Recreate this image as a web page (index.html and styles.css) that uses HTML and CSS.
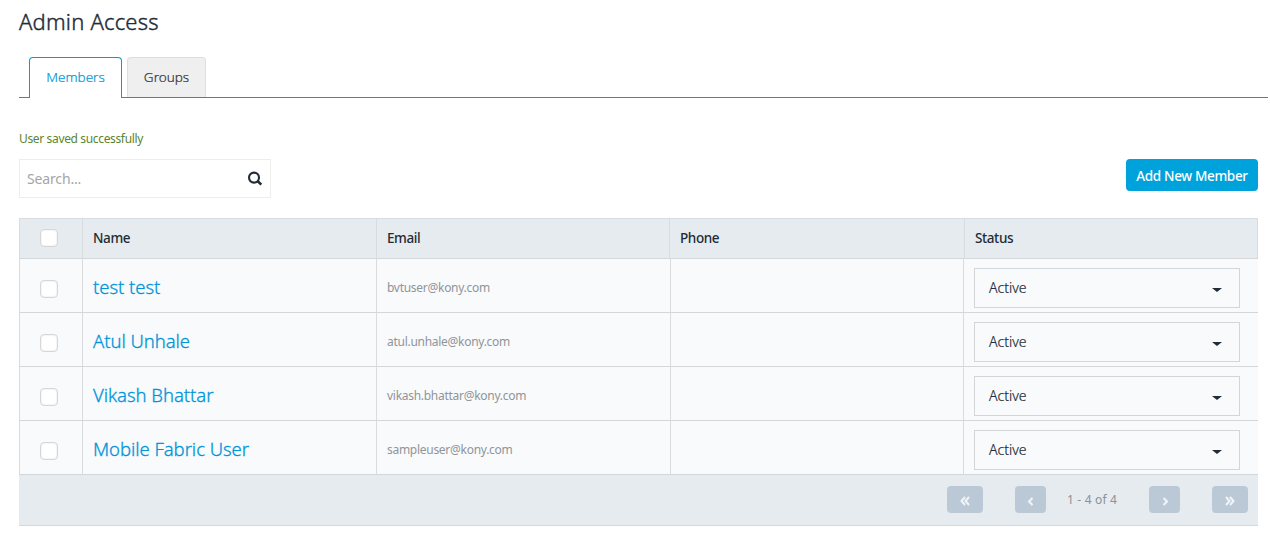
FILE: index.html
```html
<!DOCTYPE html>
<html lang="en">
<head>
<meta charset="utf-8">
<title>Admin Access</title>
<link rel="stylesheet" href="styles.css">
</head>
<body>
<main class="page">
  <h1 class="title"><span class="t">Admin Access</span></h1>
  <nav class="tabs">
    <a class="tab tab-active"><span class="t">Members</span></a>
    <a class="tab"><span class="t">Groups</span></a>
  </nav>
  <p class="message"><span class="t">User saved successfully</span></p>
  <div class="toolbar">
    <div class="search">
      <span class="t">Search...</span>
      <svg class="search-icon" width="16" height="16" viewBox="0 0 16 16"><circle cx="7" cy="6.600" r="5" fill="none" stroke="#222b38" stroke-width="2.100"/><path d="M10.500 10L14.300 13.600" stroke="#222b38" stroke-width="2.600"/></svg>
    </div>
    <button class="add"><span class="t">Add New Member</span></button>
  </div>
  <section class="table">
    <div class="row head">
      <div class="cell check"><i class="box"></i></div>
      <div class="cell"><span class="t">Name</span></div>
      <div class="cell"><span class="t">Email</span></div>
      <div class="cell"><span class="t">Phone</span></div>
      <div class="cell"><span class="t">Status</span></div>
    </div>
    <div class="row">
      <div class="cell check"><i class="box"></i></div>
      <div class="cell name"><span class="t">test test</span></div>
      <div class="cell email"><span class="t">bvtuser@kony.com</span></div>
      <div class="cell"></div>
      <div class="cell status"><div class="select"><span class="t">Active</span><i class="caret"></i></div></div>
    </div>
    <div class="row">
      <div class="cell check"><i class="box"></i></div>
      <div class="cell name"><span class="t">Atul Unhale</span></div>
      <div class="cell email"><span class="t">atul.unhale@kony.com</span></div>
      <div class="cell"></div>
      <div class="cell status"><div class="select"><span class="t">Active</span><i class="caret"></i></div></div>
    </div>
    <div class="row">
      <div class="cell check"><i class="box"></i></div>
      <div class="cell name"><span class="t">Vikash Bhattar</span></div>
      <div class="cell email"><span class="t">vikash.bhattar@kony.com</span></div>
      <div class="cell"></div>
      <div class="cell status"><div class="select"><span class="t">Active</span><i class="caret"></i></div></div>
    </div>
    <div class="row">
      <div class="cell check"><i class="box"></i></div>
      <div class="cell name"><span class="t">Mobile Fabric User</span></div>
      <div class="cell email"><span class="t">sampleuser@kony.com</span></div>
      <div class="cell"></div>
      <div class="cell status"><div class="select"><span class="t">Active</span><i class="caret"></i></div></div>
    </div>
    <div class="pager">
      <button class="pg wide first"><svg width="10" height="10" viewBox="0 0 10 10"><path d="M5 1L1.500 5L5 9M9 1L5.500 5L9 9"/></svg></button>
      <button class="pg prev"><svg width="10" height="10" viewBox="0 0 10 10"><path d="M6.500 2L3 5.500L6.500 9"/></svg></button>
      <span class="range"><span class="t">1 - 4 of 4</span></span>
      <button class="pg next"><svg width="10" height="10" viewBox="0 0 10 10"><path d="M3.500 2L7 5.500L3.500 9"/></svg></button>
      <button class="pg wide"><svg width="10" height="10" viewBox="0 0 10 10"><path d="M1 1L4.500 5L1 9M5 1L8.500 5L5 9"/></svg></button>
    </div>
  </section>
</main>
</body>
</html>
```
FILE: styles.css
```css
* { box-sizing: border-box; }
body { margin: 0; background: #fff; color: #222b38; font-family: "Noto Sans", "Open Sans", sans-serif; font-size: 14px; overflow: hidden; }
.page { padding: 8px 12px 0 19px; }
.t { white-space: nowrap; }
.title { margin: 0; height: 49px; font-size: 22px; line-height: 27px; font-weight: 300; letter-spacing: .2px; -webkit-text-stroke: .4px; }
.tabs { display: flex; gap: 5px; height: 41px; width: 1249px; padding-left: 10px; border-bottom: 1px solid #009fcf; }
.tab { width: 79px; height: 40px; border: 1px solid #dedede; border-bottom: 0; border-radius: 4px 4px 0 0; background: #efefef; color: #30343b; font-size: 13.5px; font-weight: 300; line-height: 38px; text-align: center; -webkit-text-stroke: .2px; }
.tab-active { width: 93px; height: 41px; border-color: #009fcf; background: #fff; color: #0095d6; }
.message { margin: 32px 0 0; height: 29px; font-size: 12px; line-height: 18px; color: #5b8530; letter-spacing: -.35px; }
.toolbar { display: flex; justify-content: space-between; align-items: flex-start; height: 59px; }
.search { display: flex; align-items: center; justify-content: space-between; width: 252px; height: 39px; padding: 0 7px; border: 1px solid #ededed; color: #a5a5a5; font-size: 14px; letter-spacing: -.15px; }
.add { width: 132px; height: 32px; padding: 2px 0 0; border: 0; border-radius: 4px; background: #00a2db; color: #fff; font: 500 13.5px/30px "Noto Sans", "Open Sans", sans-serif; letter-spacing: -.35px; }
.table { width: 1239px; background: #f8fafc; }
.row { display: grid; grid-template-columns: 64px 294px 294px 293px 294px; height: 54px; border-bottom: 1px solid #d4d7da; }
.cell { display: flex; align-items: center; padding-left: 10px; border-right: 1px solid #d9dcdf; }
.cell:last-child { border-right: 0; }
.head { grid-template-columns: 64px 294px 293px 295px 293px; height: 41px; border-top: 1px solid #d9dcdf; background: #e6ebef; font-size: 13.5px; font-weight: 500; letter-spacing: -.4px; }
.head .cell { padding-bottom: 1px; }
.head .cell:last-child { border-right: 1px solid #d9dcdf; }
.cell.check { padding-left: 20px; border-left: 1px solid #d9dcdf; }
.row .box { margin-top: 7px; }
.head .box { margin-top: 0; }
.box { width: 18px; height: 18px; border: 1px solid #d6d6d6; border-radius: 4px; background: #fff; box-shadow: inset 0 0 2px #ddd; }
.name { font-size: 18.5px; font-weight: 300; color: #0095d8; padding-top: 2px; letter-spacing: -.05px; -webkit-text-stroke: .3px; }
.email { font-size: 12px; color: #919499; padding-top: 3px; letter-spacing: -.28px; }
.select { display: flex; align-items: center; justify-content: space-between; width: 266px; height: 40px; margin-top: 4px; padding: 0 17px 0 14px; border: 1px solid #d1d6da; font-size: 14px; font-weight: 300; -webkit-text-stroke: .2px; }
.caret { margin-top: 4px; border: 5px solid transparent; border-top: 4px solid #222b38; border-bottom: 0; }
.pager { display: flex; align-items: flex-start; justify-content: flex-end; height: 51px; padding: 11px 10px 0 0; border-bottom: 1px solid #d5d9dc; background: #e6ebef; }
.pg { display: flex; align-items: center; justify-content: center; width: 31px; height: 27px; padding: 2px 0 0; border: 0; border-radius: 4px; background: #bbc9d7; }
.wide { width: 36px; }
.pg svg { fill: none; stroke: #f1f5f8; stroke-width: 2; }
.prev { margin-left: 32px; }
.next { margin-right: 32px; }
.range { width: 103px; padding-right: 11px; text-align: center; font-size: 12px; line-height: 27px; color: #8a9198; letter-spacing: .18px; }
```
